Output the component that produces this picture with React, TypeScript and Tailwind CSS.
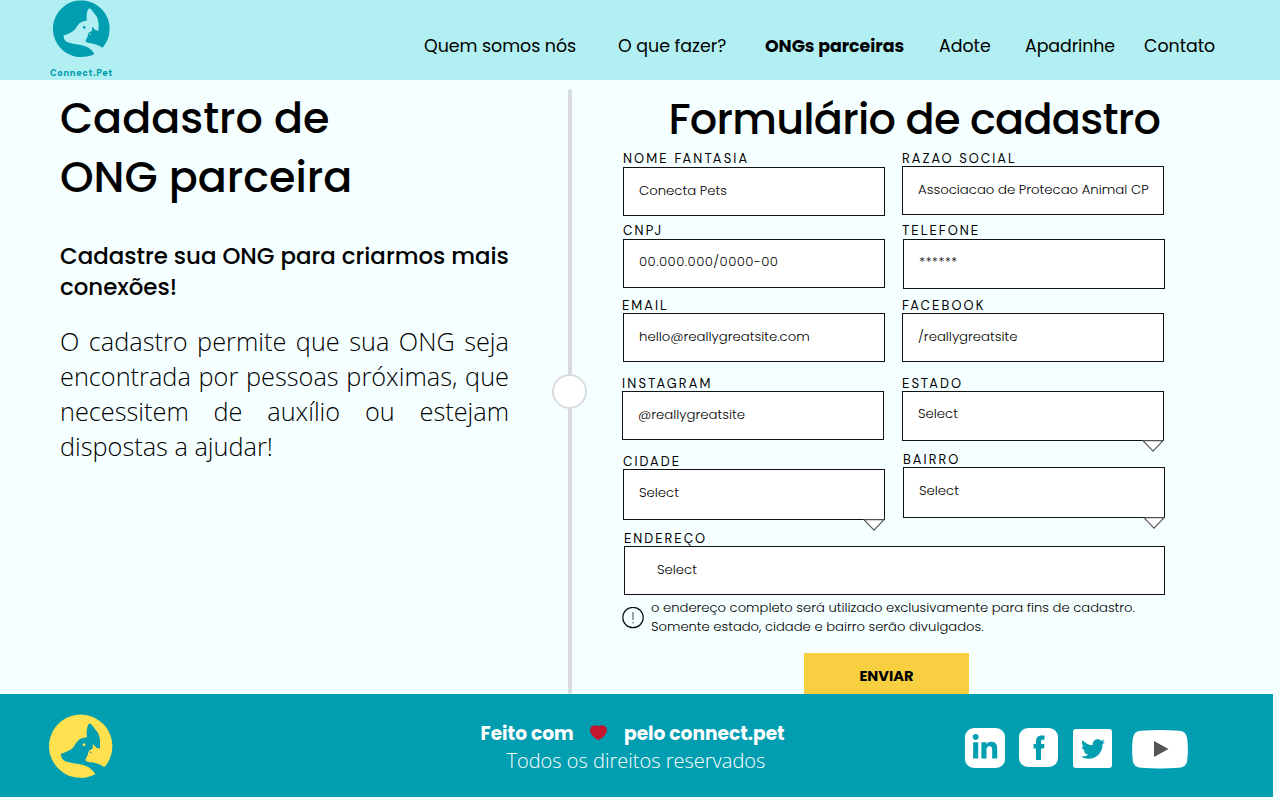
import { FaLinkedinIn, FaTwitter } from 'react-icons/fa';

function PetLogo({ className }: { className: string }) {
  return (
    <svg viewBox="53 99 196 196" className={className} aria-hidden="true">
      <path
        fill="currentColor"
        d="M195 283C186 266 170 257 148 253C128 249 104 247 97 238C93 232 91 226 92 221C104 217 119 212 128 203C136 194 140 180 154 175C160 173 165 173 170 171C167 156 171 134 178 130C187 134 192 146 199 153C209 164 211 186 208 207C203 204 201 204 199 204C196 201 191 195 188 192C187 198 188 203 186 207C178 209 173 214 173 222C172 229 166 233 165 240C169 247 177 246 184 247C199 249 212 255 222 262A95 95 0 1 0 195 283ZM178.500 217a2.500 2.500 0 1 0 5 0a2.500 2.500 0 1 0 -5 0Z"
        fillRule="evenodd"
      />
      <circle cx="161" cy="194" r="4.5" fill="currentColor" />
    </svg>
  );
}

const navItems = [
  { label: 'Quem somos nós', style: 'w-[194px] tracking-[-0.03px]' },
  { label: 'O que fazer?', style: 'w-[147px]' },
  { label: 'ONGs parceiras', style: 'w-[174px] font-bold tracking-[-0.05px]' },
  { label: 'Adote', style: 'w-[86px]' },
  { label: 'Apadrinhe', style: 'w-[119px] tracking-[-0.08px]' },
  { label: 'Contato', style: '' },
];

type FieldProps = {
  label: string;
  value: string;
  className?: string;
  labelStyle?: string;
  box?: string;
  select?: boolean;
};

function Field({
  label,
  value,
  className = '',
  labelStyle = 'leading-[18px] tracking-[2.1px]',
  box = 'h-[49px] leading-[46px]',
  select,
}: FieldProps) {
  return (
    <div className={`w-[262px] ${className}`}>
      <div className={`h-4 whitespace-nowrap font-['DM_Sans','Inter',sans-serif] text-[13px] ${labelStyle}`}>
        {label}
      </div>
      <div
        className={`relative whitespace-nowrap border border-[#111] bg-white pl-[15px] text-[13.25px] font-light ${box}`}
      >
        {value}
        {select && (
          <svg viewBox="0 0 22 12" className="absolute top-full -right-px h-3 w-[22px]" aria-hidden="true">
            <path d="M1 .7H21L11 11.2Z" fill="#fff" stroke="#555" strokeWidth="1.1" />
          </svg>
        )}
      </div>
    </div>
  );
}

export default function App() {
  return (
    <div className="flex h-[800px] w-[1280px] flex-col overflow-hidden bg-[#f5ffff] font-['Poppins','Inter',sans-serif] text-black">
      <header className="flex h-20 shrink-0 bg-[#b1eff2]">
        <div className="flex w-[424px] flex-col pl-[50px] text-[#009eb0]">
          <PetLogo className="-mt-px ml-[2px] size-[58.5px]" />
          <span className="mt-[9px] whitespace-nowrap font-['DM_Sans','Inter',sans-serif] text-[9px] leading-3 font-black tracking-[0.65px]">
            Connect.Pet
          </span>
        </div>
        <nav className="flex pt-[33px] text-[17.4px] leading-[26px] whitespace-nowrap">
          {navItems.map((item) => (
            <a key={item.label} className={item.style}>
              {item.label}
            </a>
          ))}
        </nav>
      </header>

      <main className="flex h-[614px] shrink-0">
        <section className="w-[552px] pt-[9px] pl-[60px]">
          <h1 className="text-[42.85px] leading-[58.5px] font-medium">
            Cadastro de
            <br />
            ONG parceira
          </h1>
          <h2 className="mt-[35px] text-[22.9px] leading-[31px] font-medium whitespace-nowrap">
            Cadastre sua ONG para criarmos mais
            <br />
            conexões!
          </h2>
          <p className="mt-[21px] w-[449px] text-justify font-['Open_Sans',sans-serif] text-[25.3px] leading-[35px] font-light">
            O cadastro permite que sua ONG seja encontrada por pessoas próximas, que necessitem de auxílio ou estejam
            dispostas a ajudar!
          </p>
        </section>

        <div className="flex w-[35px] flex-col items-center pt-[9px]">
          <div className="h-[285px] w-1 rounded-t bg-[#d9dcdf]" />
          <div className="size-[35px] shrink-0 rounded-full border-2 border-[#d9dcdf] bg-white" />
          <div className="h-[285px] w-1 rounded-b bg-[#d9dcdf]" />
        </div>

        <form className="w-[600px] pl-[35px]">
          <h2 className="pt-[10px] pl-[46.5px] text-[43px] leading-[58px] font-medium tracking-[-0.78px] whitespace-nowrap">
            Formulário de cadastro
          </h2>
          <div className="flex h-[382px] gap-[17px]">
            <div className="flex w-[263px] flex-col pt-[3px]">
              <Field
                label="NOME FANTASIA"
                value="Conecta Pets"
                className="ml-px"
                labelStyle="leading-4 tracking-[2.13px]"
              />
              <Field
                label="CNPJ"
                value="00.000.000/0000-00"
                className="mt-[7px] ml-px"
                labelStyle="leading-4 tracking-[2.2px]"
                box="h-[49px] leading-[44px] tracking-[0.42px]"
              />
              <Field
                label="EMAIL"
                value="hello@reallygreatsite.com"
                className="mt-[9px] ml-px"
                labelStyle="-ml-px leading-[18px] tracking-[2px]"
              />
              <Field
                label="INSTAGRAM"
                value="@reallygreatsite"
                className="mt-[13px]"
                labelStyle="leading-[18px] tracking-[2.2px]"
              />
              <Field label="CIDADE" value="Select" className="mt-[13px] ml-px" box="h-[51px] leading-[46px]" select />
            </div>
            <div className="flex w-[263px] flex-col pt-[2px]">
              <Field
                label="RAZAO SOCIAL"
                value="Associacao de Protecao Animal CP"
                labelStyle="leading-[17px] tracking-[2.03px]"
              />
              <Field
                label="TELEFONE"
                value="******"
                className="mt-2 ml-px"
                labelStyle="-ml-px leading-4 tracking-[2px]"
                box="h-[50px] leading-[44px] tracking-[0.2px]"
              />
              <Field
                label="FACEBOOK"
                value="/reallygreatsite"
                className="mt-2"
                labelStyle="leading-[18px] tracking-[2.15px]"
              />
              <Field label="ESTADO" value="Select" className="mt-[13px]" box="h-[50px] leading-[44px]" select />
              <Field label="BAIRRO" value="Select" className="mt-[10px] ml-px" box="h-[51px] leading-[46px]" select />
            </div>
          </div>
          <Field
            label="ENDEREÇO"
            value="Select"
            className="ml-[2px] w-[541px]!"
            labelStyle="leading-[18px] tracking-[2px]"
            box="h-[49px] pl-[32px]! leading-[46px]"
          />
          <div className="flex pt-[3px]">
            <svg viewBox="0 0 22 22" className="mt-[9px] size-[22px]" fill="none" stroke="#111" aria-hidden="true">
              <circle cx="11" cy="10.5" r="10.2" strokeWidth="1.2" />
              <path d="M11 5v8M11 15v1.400" strokeWidth="1.1" stroke="#555" />
            </svg>
            <p className="pl-[7px] text-[13.15px] leading-[19px] font-light whitespace-nowrap">
              o endereço completo será utilizado exclusivamente para fins de cadastro.
              <br />
              Somente estado, cidade e bairro serão divulgados.
            </p>
          </div>
          <button
            type="button"
            className="mt-[17px] ml-[182px] h-[41px] w-[165px] bg-[#f8cf40] pt-[5px] text-[14.6px] leading-[36px] font-bold"
          >
            ENVIAR
          </button>
        </form>
      </main>

      <footer className="flex h-[103px] w-[1273px] shrink-0 bg-[#009eb0] text-white">
        <div className="w-[480.5px] pt-[19px] pl-[48px] text-[#ffe14f]">
          <PetLogo className="size-[65.3px]" />
        </div>
        <div className="w-[484.5px] pt-[26px]">
          <div className="flex text-[18.6px] leading-[28px] font-bold whitespace-nowrap">
            <span className="w-[109.5px]">Feito com</span>
            <svg viewBox="0 0 17 15" className="mt-[5px] h-[15px] w-[17px]" aria-hidden="true">
              <path
                fill="#c4162d"
                d="M8.5 1.4C10 0 12.500-.1 14.400 .7C16.600 1.700 17.400 4.200 16.600 7C15.600 10.400 12 13.600 8.500 15C5 13.600 1.400 10.400 .4 7C-.4 4.200 .4 1.700 2.600 .7C4.500-.1 7 0 8.500 1.4Z"
              />
            </svg>
            <span className="pl-[17px]">pelo connect.pet</span>
          </div>
          <p className="-mt-px pl-[26px] font-['Open_Sans',sans-serif] text-[20px] leading-[27px] font-light whitespace-nowrap">
            Todos os direitos reservados
          </p>
        </div>
        <div className="flex items-start pt-[34px] text-[#009eb0]">
          <div className="flex h-10 w-10 items-center justify-center rounded-[9px] bg-white">
            <FaLinkedinIn className="size-[28px]" />
          </div>
          <div className="ml-[14px] flex h-[39px] w-[39px] items-center justify-center rounded-[9px] bg-white">
            <svg viewBox="0 0 12 25" className="h-[25px] w-3" fill="currentColor" aria-hidden="true">
              <path d="M3 25V13.500H.5V9H3V6.500C3 2.500 5 .5 8.500 .5H11.500V4.800H9.700C8.500 4.800 8 5.400 8 6.500V9H11.500L11 13.500H8V25Z" />
            </svg>
          </div>
          <div className="mt-px ml-[15px] flex h-[39px] w-[39px] items-center justify-center rounded-[3px] bg-white">
            <FaTwitter className="size-6" />
          </div>
          <svg viewBox="0 0 56 39" className="mt-[2px] ml-[20px] h-[39px] w-[56px]" aria-hidden="true">
            <path
              fill="#fff"
              d="M9 .8Q28-.7 47 .8Q54.500 1 55.300 9Q56.500 19.500 55.300 30Q54.500 37.500 47 37.800Q28 39.300 9 37.800Q1.500 37.500 .7 30Q-.5 19.500 .7 9Q1.500 1 9 .8Z"
            />
            <path fill="#555" d="M22 11V27L36.500 19Z" />
          </svg>
        </div>
      </footer>
    </div>
  );
}
